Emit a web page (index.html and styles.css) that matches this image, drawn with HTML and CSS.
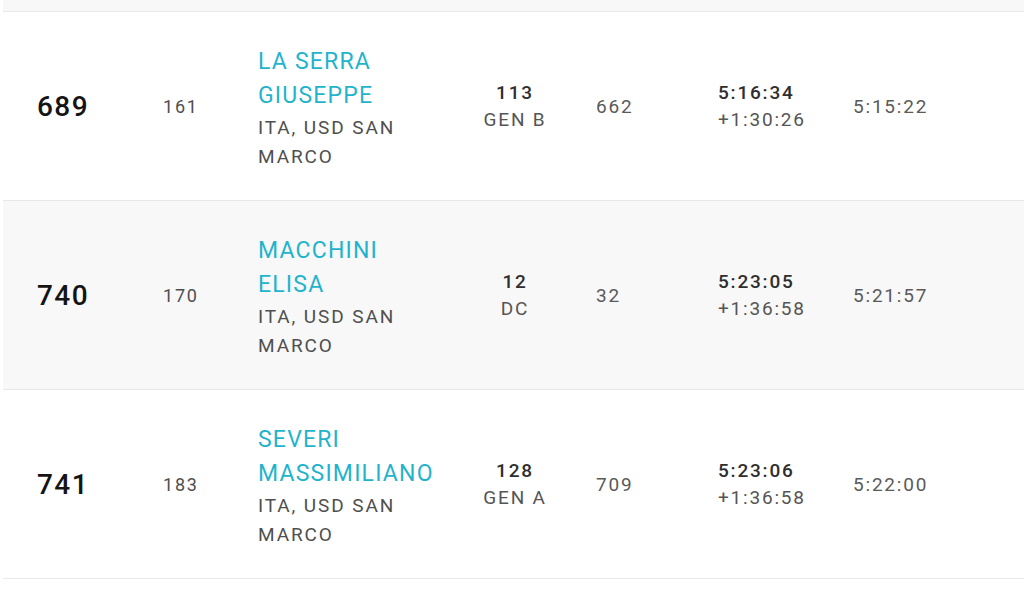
FILE: index.html
```html
<!DOCTYPE html>
<html lang="it">
<head>
<meta charset="utf-8">
<title>Classifica</title>
<link rel="stylesheet" href="styles.css">
</head>
<body>
<div class="results">
  <div class="row row-alt row-partial"></div>

  <div class="row">
    <div class="cell rank">689</div>
    <div class="cell bib">161</div>
    <div class="cell athlete">
      <div class="name">LA SERRA GIUSEPPE</div>
      <div class="club">ITA, USD SAN MARCO</div>
    </div>
    <div class="cell cat">
      <div class="primary">113</div>
      <div class="secondary">GEN B</div>
    </div>
    <div class="cell overall">662</div>
    <div class="cell time">
      <div class="primary">5:16:34</div>
      <div class="secondary">+1:30:26</div>
    </div>
    <div class="cell net">5:15:22</div>
  </div>

  <div class="row row-alt">
    <div class="cell rank">740</div>
    <div class="cell bib">170</div>
    <div class="cell athlete">
      <div class="name">MACCHINI ELISA</div>
      <div class="club">ITA, USD SAN MARCO</div>
    </div>
    <div class="cell cat">
      <div class="primary">12</div>
      <div class="secondary">DC</div>
    </div>
    <div class="cell overall">32</div>
    <div class="cell time">
      <div class="primary">5:23:05</div>
      <div class="secondary">+1:36:58</div>
    </div>
    <div class="cell net">5:21:57</div>
  </div>

  <div class="row">
    <div class="cell rank">741</div>
    <div class="cell bib">183</div>
    <div class="cell athlete">
      <div class="name">SEVERI MASSIMILIANO</div>
      <div class="club">ITA, USD SAN MARCO</div>
    </div>
    <div class="cell cat">
      <div class="primary">128</div>
      <div class="secondary">GEN A</div>
    </div>
    <div class="cell overall">709</div>
    <div class="cell time">
      <div class="primary">5:23:06</div>
      <div class="secondary">+1:36:58</div>
    </div>
    <div class="cell net">5:22:00</div>
  </div>
</div>
</body>
</html>
```

FILE: styles.css
```css
html, body {
  margin: 0;
  padding: 0;
  background: #ffffff;
}

body {
  font-family: Roboto, "Liberation Sans", Arial, sans-serif;
  color: #5a5a5a;
}

.results {
  margin-left: 3px;
}

.row {
  display: grid;
  grid-template-columns: 160px 95px 185px 144px 131px 135px 1fr;
  align-items: center;
  height: 188px;
  border-bottom: 1px solid #e8e8e8;
  background: #ffffff;
}

.row-alt {
  background: #f8f8f8;
}

.row-partial {
  height: 11px;
}

.cell {
  font-size: 19px;
  letter-spacing: 1.8px;
  font-weight: 400;
  color: #5a5a5a;
  line-height: 27px;
}

.rank {
  padding-left: 34px;
  font-size: 28px;
  letter-spacing: 1.4px;
  font-weight: 500;
  color: #141414;
}

.bib {
  font-size: 18px;
  letter-spacing: 1.8px;
  color: #4f4f4f;
}

.athlete {
  padding-top: 3px;
}

.name {
  font-size: 23px;
  letter-spacing: 1.2px;
  line-height: 34px;
  font-weight: 400;
  color: #1fb4cc;
}

.club {
  font-size: 19px;
  letter-spacing: 1.9px;
  line-height: 29px;
  color: #4f4f4f;
}

.cat {
  text-align: center;
}

.overall {
  padding-left: 9px;
}

.primary {
  color: #2e2e2e;
  font-weight: 500;
}

.secondary {
  color: #555555;
}
```
